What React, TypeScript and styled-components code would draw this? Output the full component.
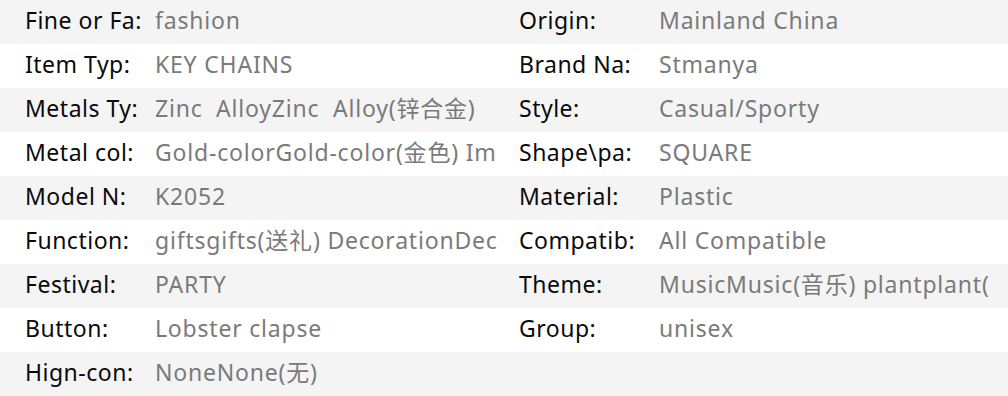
import styled, { createGlobalStyle } from "styled-components";

const GlobalStyle = createGlobalStyle`
  body {
    margin: 0;
    background: #fff;
    font-family: "Noto Sans", "Noto Sans CJK SC", sans-serif;
  }
`;

const specs: [string, string][] = [
  ["Fine or Fa:", "fashion"],
  ["Origin:", "Mainland China"],
  ["Item Typ:", "KEY CHAINS"],
  ["Brand Na:", "Stmanya"],
  ["Metals Ty:", "Zinc  AlloyZinc  Alloy(锌合金)"],
  ["Style:", "Casual/Sporty"],
  ["Metal col:", "Gold-colorGold-color(金色) ImitationImitation(仿金)"],
  ["Shape\\pa:", "SQUARE"],
  ["Model N:", "K2052"],
  ["Material:", "Plastic"],
  ["Function:", "giftsgifts(送礼) DecorationDecoration(装饰)"],
  ["Compatib:", "All Compatible"],
  ["Festival:", "PARTY"],
  ["Theme:", "MusicMusic(音乐) plantplant(植物)"],
  ["Button:", "Lobster clapse"],
  ["Group:", "unisex"],
  ["Hign-con:", "NoneNone(无)"],
];

const App = () => {
  const rows: [string, string][][] = [];
  for (let i = 0; i < specs.length; i += 2) rows.push(specs.slice(i, i + 2));

  return (
    <>
      <GlobalStyle />
      <SpecTable>
        {rows.map((row, i) => (
          <Row key={i} $striped={i % 2 === 0}>
            {row.map(([label, value], j) => (
              <Item key={label} $right={j === 1}>
                <Label $right={j === 1}>{label}</Label>
                <Value>{value}</Value>
              </Item>
            ))}
          </Row>
        ))}
      </SpecTable>
    </>
  );
};

const SpecTable = styled.div`
  width: 1008px;
  display: flex;
  flex-direction: column;
`;

const Row = styled.div<{ $striped: boolean }>`
  height: 44px;
  display: grid;
  grid-template-columns: 519px 1fr;
  align-items: center;
  background: ${(p) => (p.$striped ? "#f4f4f4" : "#fff")};
`;

const Item = styled.div<{ $right: boolean }>`
  display: flex;
  align-items: flex-start;
  padding-left: ${(p) => (p.$right ? "0" : "25px")};
  padding-right: ${(p) => (p.$right ? "6px" : "19px")};
  padding-bottom: 4px;
  min-width: 0;
  font-size: 23px;
  letter-spacing: 0.5px;
  line-height: 30px;
`;

const Label = styled.span<{ $right: boolean }>`
  flex: 0 0 ${(p) => (p.$right ? "140px" : "130px")};
  color: #0a0a0a;
  white-space: nowrap;
  overflow: hidden;
`;

/* only the first line of a long value shows, cut at any character */
const Value = styled.span`
  flex: 1;
  min-width: 0;
  height: 30px;
  overflow: hidden;
  white-space: pre-wrap;
  line-break: anywhere;
  letter-spacing: 0.8px;
  color: #7a7a7a;
`;

export default App;
